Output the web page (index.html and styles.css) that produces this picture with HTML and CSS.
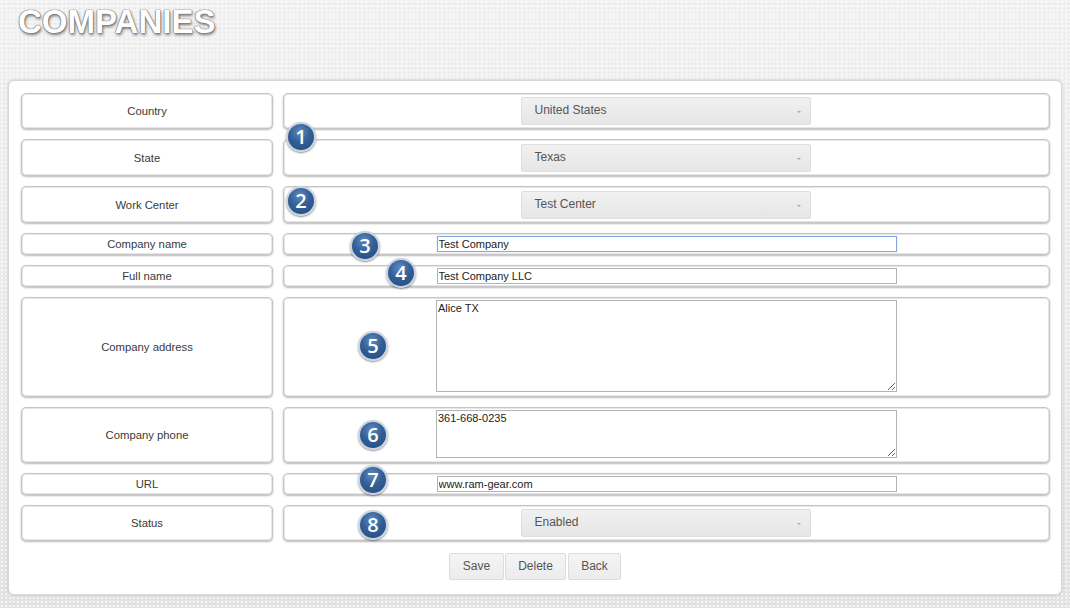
FILE: index.html
```html
<!DOCTYPE html>
<html lang="en">
<head>
<meta charset="utf-8">
<title>Companies</title>
<link rel="stylesheet" href="styles.css">
</head>
<body>
<h1 class="page-title">COMPANIES</h1>
<form class="panel">
  <div class="rows">
    <div class="row h36">
      <div class="label">Country</div>
      <div class="value"><div class="select"><span>United States</span></div></div>
    </div>
    <div class="row h37">
      <div class="label">State</div>
      <div class="value"><div class="select"><span>Texas</span></div></div>
    </div>
    <div class="row h37">
      <div class="label">Work Center</div>
      <div class="value"><div class="select"><span>Test Center</span></div></div>
    </div>
    <div class="row h22">
      <div class="label">Company name</div>
      <div class="value"><input class="field focused" type="text" value="Test Company"></div>
    </div>
    <div class="row h22">
      <div class="label">Full name</div>
      <div class="value"><input class="field" type="text" value="Test Company LLC"></div>
    </div>
    <div class="row h100">
      <div class="label">Company address</div>
      <div class="value top"><textarea class="area area-lg">Alice TX</textarea></div>
    </div>
    <div class="row h56">
      <div class="label">Company phone</div>
      <div class="value top"><textarea class="area area-sm">361-668-0235</textarea></div>
    </div>
    <div class="row h22">
      <div class="label">URL</div>
      <div class="value"><input class="field" type="text" value="www.ram-gear.com"></div>
    </div>
    <div class="row h36">
      <div class="label">Status</div>
      <div class="value"><div class="select"><span>Enabled</span></div></div>
    </div>
  </div>
  <div class="actions">
    <button type="button" class="btn btn-save">Save</button>
    <button type="button" class="btn btn-delete">Delete</button>
    <button type="button" class="btn btn-back">Back</button>
  </div>

  <span class="badge b1">1</span>
  <span class="badge b2">2</span>
  <span class="badge b3">3</span>
  <span class="badge b4">4</span>
  <span class="badge b5">5</span>
  <span class="badge b6">6</span>
  <span class="badge b7">7</span>
  <span class="badge b8">8</span>
</form>
</body>
</html>
```

FILE: styles.css
```css
* { box-sizing: border-box; }

html, body { height: 100%; }

body {
  margin: 0;
  font-family: "Liberation Sans", Arial, sans-serif;
  color: #333;
  background-color: #ebebeb;
  background-image:
    radial-gradient(rgba(255,255,255,0.6) 1px, transparent 1.5px),
    radial-gradient(rgba(0,0,0,0.03) 1px, transparent 1.5px),
    linear-gradient(180deg, #f2f2f2 0%, #ebebeb 60%, #e4e4e4 100%);
  background-size: 4px 4px, 5px 5px, 100% 100%;
  background-position: 0 0, 2px 1px, 0 0;
  overflow: hidden;
}

.page-title {
  margin: 0;
  padding: 2px 0 0 18px;
  height: 80px;
  font-size: 33px;
  line-height: 40px;
  font-weight: bold;
  color: #fff;
  text-shadow:
    0 0 1px #6f6f6f,
    0 0 1px #6f6f6f,
    0 0 1px #6f6f6f,
    1px 2px 3px rgba(0,0,0,0.5);
}

.panel {
  position: relative;
  margin: 0 8px;
  width: 1054px;
  height: 515px;
  padding: 12px 11px 14px 12px;
  background: #fff;
  border: 1px solid #d9d9d9;
  border-radius: 6px;
  box-shadow: 0 0 3px rgba(0,0,0,0.18);
}

.rows {
  display: flex;
  flex-direction: column;
  gap: 10px;
}

.row {
  display: flex;
  gap: 10px;
}

.h22 { height: 22px; }
.h36 { height: 36px; }
.h37 { height: 37px; }
.h56 { height: 56px; }
.h100 { height: 100px; }

.label,
.value {
  border: 1px solid #c6c6c6;
  border-radius: 5px;
  background: #fff;
  box-shadow: 0 1px 2px rgba(0,0,0,0.28), inset 0 0 0 1px #e6e6e6;
}

.label {
  width: 252px;
  flex: none;
  display: flex;
  align-items: center;
  justify-content: center;
  font-size: 11.3px;
  color: #3a3a3a;
}

.value {
  width: 767px;
  flex: none;
  display: flex;
  align-items: center;
  justify-content: center;
}

.value.top {
  align-items: flex-start;
  padding-top: 2px;
}

.select {
  position: relative;
  width: 290px;
  height: 28px;
  margin-right: 2px;
  display: flex;
  align-items: center;
  padding: 0 0 2px 13px;
  font-size: 12px;
  color: #555;
  background: linear-gradient(180deg, #f1f1f1 0%, #ebebeb 50%, #e6e6e6 100%);
  border: 1px solid #dedede;
  border-radius: 2px;
}

.select::after {
  content: "";
  position: absolute;
  right: 9px;
  top: 13px;
  width: 0;
  height: 0;
  border-left: 2px solid transparent;
  border-right: 2px solid transparent;
  border-top: 2px solid #aaa;
}

.field {
  width: 460px;
  height: 16px;
  margin: 0;
  padding: 0 1px;
  font-family: "Liberation Sans", Arial, sans-serif;
  font-size: 11px;
  color: #222;
  border: 1px solid #b4b4b4;
  border-radius: 0;
  background: #fff;
  outline: none;
}

.field.focused {
  border-color: #86a6d8;
  box-shadow: 0 0 1px #b9cdee;
}

.area {
  width: 461px;
  margin: 0;
  padding: 1px 1px;
  font-family: "Liberation Sans", Arial, sans-serif;
  font-size: 11px;
  color: #222;
  border: 1px solid #b4b4b4;
  border-radius: 0;
  background: #fff;
  outline: none;
  resize: both;
}

.area-lg { height: 92px; }
.area-sm { height: 48px; }

.actions {
  display: flex;
  justify-content: center;
  gap: 1px;
  margin-top: 12px;
  padding-right: 1px;
}

.btn {
  height: 27px;
  margin: 0;
  padding: 0 0 2px;
  font-family: "Liberation Sans", Arial, sans-serif;
  font-size: 12px;
  color: #555;
  background: linear-gradient(180deg, #f4f4f4, #ececec);
  border: 1px solid #dcdcdc;
  border-radius: 2px;
}

.btn-save { width: 55px; }
.btn-delete { width: 61px; margin-right: 1px; }
.btn-back { width: 53px; }

.badge {
  position: absolute;
  width: 30px;
  height: 30px;
  border-radius: 50%;
  display: flex;
  align-items: center;
  justify-content: center;
  font-family: "Open Sans", "Liberation Sans", sans-serif;
  font-weight: 600;
  font-size: 20px;
  line-height: 1;
  color: #fff;
  background: radial-gradient(circle at 45% 30%, #5f89bf 0%, #345f96 45%, #224a7e 100%);
  border: 2px solid #c8d3e1;
  box-shadow: 0 1px 2px rgba(0,0,0,0.45);
}

.b1 { left: 277px; top: 41px; }
.b2 { left: 277px; top: 105px; }
.b3 { left: 341px; top: 150px; }
.b4 { left: 377px; top: 177px; }
.b5 { left: 349px; top: 250px; }
.b6 { left: 349px; top: 339px; }
.b7 { left: 349px; top: 384px; }
.b8 { left: 349px; top: 429px; }
```
